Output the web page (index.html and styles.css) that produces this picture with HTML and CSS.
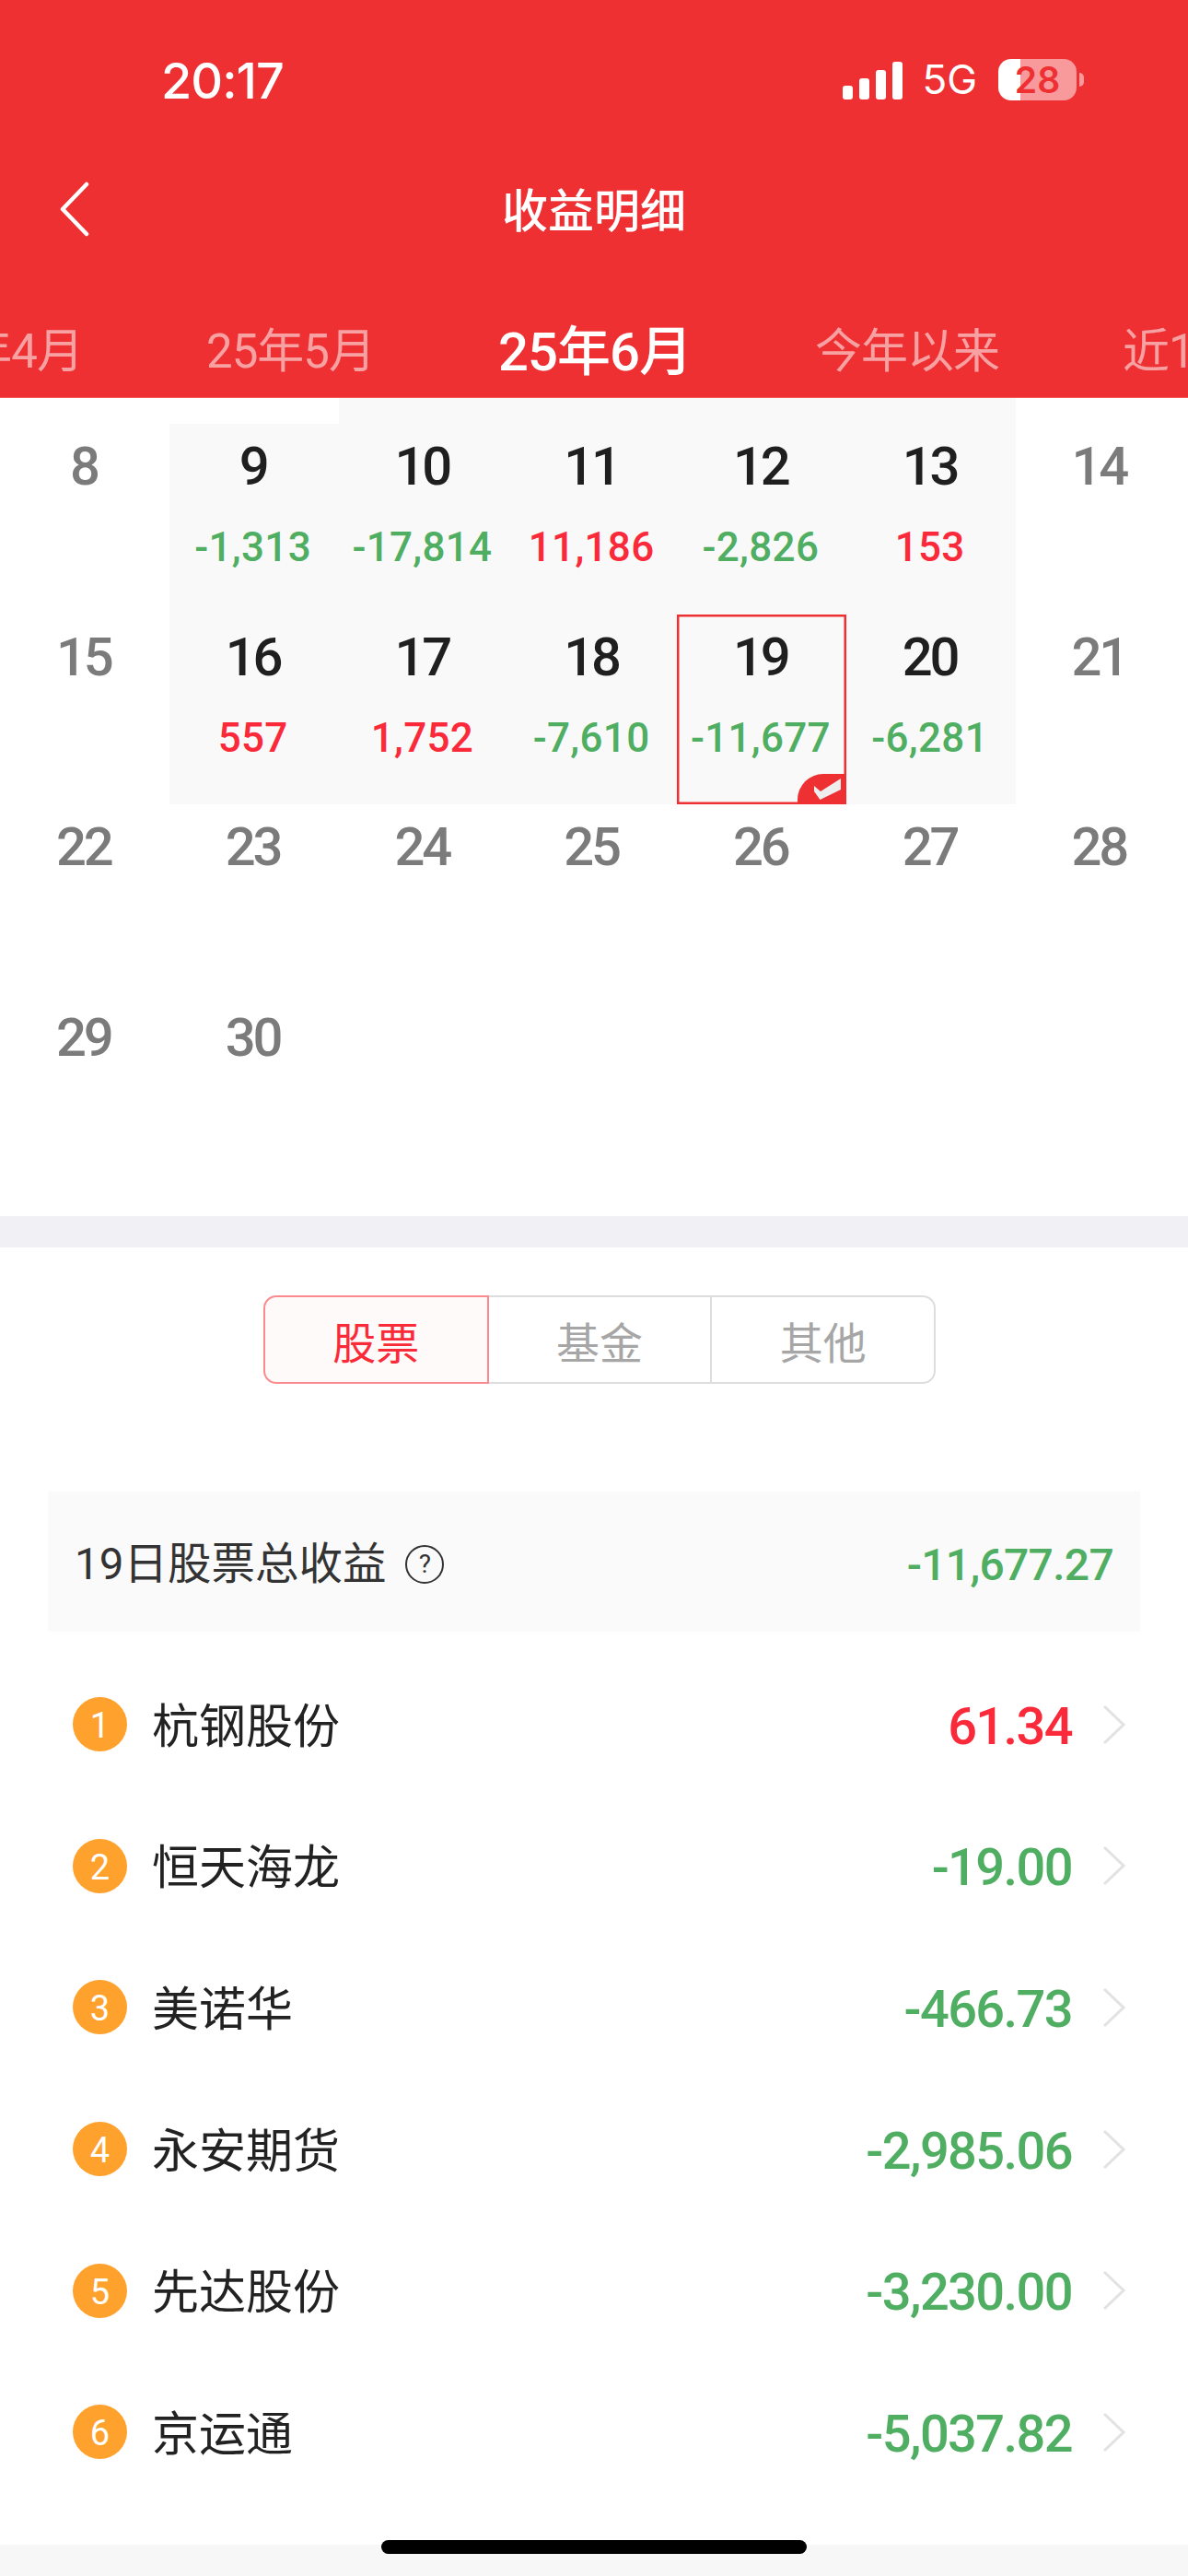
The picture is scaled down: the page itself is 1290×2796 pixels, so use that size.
FILE: index.html
```html
<!DOCTYPE html>
<html lang="zh-CN">
<head>
    <meta charset="utf-8">
    <title>收益明细</title>
    <link rel="stylesheet" href="styles.css">
</head>
<body>
    <header class="top">
        <div class="status">
            <span class="status__time">20:17</span>
            <div class="status__right">
                <svg class="status__signal" width="65" height="41" viewBox="0 0 65 41">
                    <rect x="0" y="26" width="11" height="15" rx="3"/>
                    <rect x="18" y="18" width="11" height="23" rx="3"/>
                    <rect x="36" y="9" width="11" height="32" rx="3"/>
                    <rect x="54" y="0" width="11" height="41" rx="3"/>
                </svg>
                <span class="status__net">5G</span>
                <span class="status__battery">28</span>
            </div>
        </div>
        <nav class="nav">
            <svg class="nav__back" width="34" height="60" viewBox="0 0 34 60">
                <path d="M30 3 L4 30 L30 57" fill="none" stroke="#fff" stroke-width="4.5" stroke-linecap="round" stroke-linejoin="round"/>
            </svg>
            <h1 class="nav__title">收益明细</h1>
        </nav>
        <div class="periods">
            <span class="periods__item">25年4月</span>
            <span class="periods__item">25年5月</span>
            <span class="periods__item periods__item--active">25年6月</span>
            <span class="periods__item">今年以来</span>
            <span class="periods__item">近1年</span>
        </div>
    </header>

    <section class="calendar">
        <div class="cell cell--stub"></div>
        <div class="cell cell--stub"></div>
        <div class="cell cell--stub cell--trade"></div>
        <div class="cell cell--stub cell--trade"></div>
        <div class="cell cell--stub cell--trade"></div>
        <div class="cell cell--stub cell--trade"></div>
        <div class="cell cell--stub"></div>

        <div class="cell"><span class="cell__day">8</span></div>
        <div class="cell cell--trade"><span class="cell__day">9</span><span class="cell__amt down">-1,313</span></div>
        <div class="cell cell--trade"><span class="cell__day">10</span><span class="cell__amt down">-17,814</span></div>
        <div class="cell cell--trade"><span class="cell__day">11</span><span class="cell__amt up">11,186</span></div>
        <div class="cell cell--trade"><span class="cell__day">12</span><span class="cell__amt down">-2,826</span></div>
        <div class="cell cell--trade"><span class="cell__day">13</span><span class="cell__amt up">153</span></div>
        <div class="cell"><span class="cell__day">14</span></div>

        <div class="cell"><span class="cell__day">15</span></div>
        <div class="cell cell--trade"><span class="cell__day">16</span><span class="cell__amt up">557</span></div>
        <div class="cell cell--trade"><span class="cell__day">17</span><span class="cell__amt up">1,752</span></div>
        <div class="cell cell--trade"><span class="cell__day">18</span><span class="cell__amt down">-7,610</span></div>
        <div class="cell cell--trade cell--selected">
            <span class="cell__day">19</span><span class="cell__amt down">-11,677</span>
            <svg class="cell__check" width="53" height="33" viewBox="0 0 53 33">
                <path d="M53 0 H28 A28 28 0 0 0 0 28 V33 H53 Z" fill="#ee3033"/>
                <polygon points="18,13 25,19 47,5 47,17 24.5,28 18,19" fill="#eee"/>
            </svg>
        </div>
        <div class="cell cell--trade"><span class="cell__day">20</span><span class="cell__amt down">-6,281</span></div>
        <div class="cell"><span class="cell__day">21</span></div>

        <div class="cell"><span class="cell__day">22</span></div>
        <div class="cell"><span class="cell__day">23</span></div>
        <div class="cell"><span class="cell__day">24</span></div>
        <div class="cell"><span class="cell__day">25</span></div>
        <div class="cell"><span class="cell__day">26</span></div>
        <div class="cell"><span class="cell__day">27</span></div>
        <div class="cell"><span class="cell__day">28</span></div>

        <div class="cell"><span class="cell__day">29</span></div>
        <div class="cell"><span class="cell__day">30</span></div>
    </section>

    <div class="band"></div>

    <section class="detail">
        <div class="tabs">
            <span class="tabs__item tabs__item--active">股票</span>
            <span class="tabs__item">基金</span>
            <span class="tabs__item">其他</span>
        </div>

        <div class="summary">
            <div class="summary__label">
                <span class="summary__text">19日股票总收益</span>
                <span class="summary__help">?</span>
            </div>
            <span class="summary__total down">-11,677.27</span>
        </div>

        <ul class="stocks">
            <li class="stock">
                <span class="stock__rank">1</span><span class="stock__name">杭钢股份</span>
                <span class="stock__value up">61.34</span>
                <svg class="stock__arrow" width="26" height="44" viewBox="0 0 26 44"><path d="M2 2 L23 22 L2 42"/></svg>
            </li>
            <li class="stock">
                <span class="stock__rank">2</span><span class="stock__name">恒天海龙</span>
                <span class="stock__value down">-19.00</span>
                <svg class="stock__arrow" width="26" height="44" viewBox="0 0 26 44"><path d="M2 2 L23 22 L2 42"/></svg>
            </li>
            <li class="stock">
                <span class="stock__rank">3</span><span class="stock__name">美诺华</span>
                <span class="stock__value down">-466.73</span>
                <svg class="stock__arrow" width="26" height="44" viewBox="0 0 26 44"><path d="M2 2 L23 22 L2 42"/></svg>
            </li>
            <li class="stock">
                <span class="stock__rank">4</span><span class="stock__name">永安期货</span>
                <span class="stock__value down">-2,985.06</span>
                <svg class="stock__arrow" width="26" height="44" viewBox="0 0 26 44"><path d="M2 2 L23 22 L2 42"/></svg>
            </li>
            <li class="stock">
                <span class="stock__rank">5</span><span class="stock__name">先达股份</span>
                <span class="stock__value down">-3,230.00</span>
                <svg class="stock__arrow" width="26" height="44" viewBox="0 0 26 44"><path d="M2 2 L23 22 L2 42"/></svg>
            </li>
            <li class="stock">
                <span class="stock__rank">6</span><span class="stock__name">京运通</span>
                <span class="stock__value down">-5,037.82</span>
                <svg class="stock__arrow" width="26" height="44" viewBox="0 0 26 44"><path d="M2 2 L23 22 L2 42"/></svg>
            </li>
        </ul>
    </section>

    <div class="footer-band"></div>
    <div class="home-bar"></div>
</body>
</html>
```

FILE: styles.css
```css
*, ::after, ::before {
    box-sizing: border-box;
}

html, body {
    margin: 0;
    height: 2796px;
    overflow: hidden;
}

body {
    position: relative;
    background: #fff;
    color: #1f1f1f;
    font-family: Roboto, "Noto Sans CJK SC", sans-serif;
}

.up {
    color: #fa2a3a;
}

.down {
    color: #4fae62;
}

/* red header */
.top {
    height: 432px;
    background: #ee3033;
    border-bottom: 1px solid #f4595b;
    color: #fff;
    overflow: hidden;
}

.status {
    height: 130px;
    padding: 64px 121px 0 175px;
    display: flex;
    justify-content: space-between;
    align-items: flex-start;
}

.status__time {
    font-family: Inter, sans-serif;
    font-size: 54px;
    font-weight: 500;
    line-height: 48px;
    letter-spacing: -1px;
}

.status__right {
    display: flex;
    align-items: center;
    height: 45px;
}

.status__signal {
    fill: #fff;
    margin: 2px 21px 0 0;
}

.status__net {
    font-family: Inter, sans-serif;
    font-size: 44px;
    line-height: 45px;
    margin-right: 23px;
}

.status__battery {
    position: relative;
    width: 85px;
    height: 45px;
    border-radius: 14px;
    background: linear-gradient(to right, #fff 24px, #f89a9c 24px);
    color: #ee3033;
    font-family: Inter, sans-serif;
    font-size: 39px;
    font-weight: 600;
    line-height: 45px;
    text-align: center;
}

.status__battery::after {
    content: "";
    position: absolute;
    left: 88px;
    top: 15px;
    width: 5px;
    height: 15px;
    border-radius: 0 6px 6px 0;
    background: #f89a9c;
}

.nav {
    height: 196px;
    position: relative;
    display: flex;
    justify-content: center;
    padding-top: 64px;
}

.nav__back {
    position: absolute;
    left: 64px;
    top: 67px;
}

.nav__title {
    margin: 0;
    font-size: 50px;
    font-weight: 500;
    line-height: 72px;
}

.periods {
    display: flex;
    gap: 134px;
    align-items: center;
    height: 70px;
    margin-left: -93px;
    margin-top: 16px;
    white-space: nowrap;
}

.periods__item {
    font-size: 51px;
    color: rgba(255, 255, 255, .55);
    letter-spacing: -1px;
}

.periods__item--active {
    font-size: 58px;
    font-weight: 500;
    color: #fff;
}

/* month grid */
.calendar {
    display: grid;
    grid-template-columns: repeat(7, 183.75px);
    grid-template-rows: 28px repeat(4, 206.5px);
    padding-bottom: 34px;
}

.cell {
    position: relative;
    display: flex;
    flex-direction: column;
    align-items: center;
    padding: 16px 2px 0 0;
}

.cell--stub {
    padding: 0;
}

.cell--trade {
    background: #f9f9f9;
}

.cell--selected {
    box-shadow: inset 0 0 0 2.5px #ee3033;
}

.cell__day {
    font-size: 58px;
    font-weight: 500;
    line-height: 60px;
    letter-spacing: -3px;
    color: #7b7b7b;
}

.cell--trade .cell__day {
    color: #1f1f1f;
}

.cell__amt {
    margin-top: 29px;
    font-size: 44px;
    font-weight: 500;
    line-height: 58px;
    letter-spacing: .3px;
}

.cell__check {
    position: absolute;
    right: 0;
    bottom: 0;
}

.band {
    height: 34px;
    background: #f0f0f5;
}

/* stock list */
.tabs {
    display: flex;
    width: 730px;
    height: 96px;
    margin: 52px 0 0 286px;
}

.tabs__item {
    flex: 1;
    display: flex;
    align-items: center;
    justify-content: center;
    border: 2px solid #ddd;
    border-left: 0;
    font-size: 47px;
    color: #a6a6a6;
}

.tabs__item:last-child {
    border-radius: 0 14px 14px 0;
}

.tabs__item--active {
    border: 2px solid #fb8a8e;
    border-radius: 14px 0 0 14px;
    background: #fffafa;
    color: #f92b38;
}

.summary {
    display: flex;
    justify-content: space-between;
    align-items: center;
    height: 152px;
    margin: 117px 52px 0;
    padding: 6px 29px 0 29px;
    background: #fafafa;
}

.summary__label {
    display: flex;
    align-items: center;
    gap: 21px;
    color: #333;
}

.summary__text {
    font-size: 47.5px;
    line-height: 60px;
}

.summary__help {
    width: 42px;
    height: 42px;
    border: 2.5px solid #333;
    border-radius: 50%;
    font-size: 28px;
    line-height: 37px;
    text-align: center;
}

.summary__total {
    font-size: 48px;
    font-weight: 500;
    letter-spacing: -.7px;
}

.stocks {
    list-style: none;
    margin: 24px 0 0;
    padding: 0 67px 0 79px;
}

.stock {
    display: flex;
    align-items: center;
    height: 153.6px;
}

.stock__rank {
    width: 59px;
    height: 59px;
    border-radius: 50%;
    background: #ffa12d;
    color: #fff;
    font-size: 38px;
    line-height: 63px;
    text-align: center;
}

.stock__name {
    margin-left: 27px;
    padding-bottom: 4px;
    font-size: 51px;
    color: #222;
}

.stock__value {
    margin-left: auto;
    padding-top: 4px;
    font-size: 56px;
    font-weight: 500;
    letter-spacing: -1.6px;
}

.stock__arrow {
    margin-left: 33px;
    fill: none;
    stroke: #e2e2e2;
    stroke-width: 3;
}

.footer-band {
    position: absolute;
    left: 0;
    right: 0;
    top: 2762px;
    bottom: 0;
    background: #f7f7f7;
}

.home-bar {
    position: absolute;
    left: 414px;
    top: 2757px;
    width: 462px;
    height: 15px;
    border-radius: 8px;
    background: #000;
}
```
